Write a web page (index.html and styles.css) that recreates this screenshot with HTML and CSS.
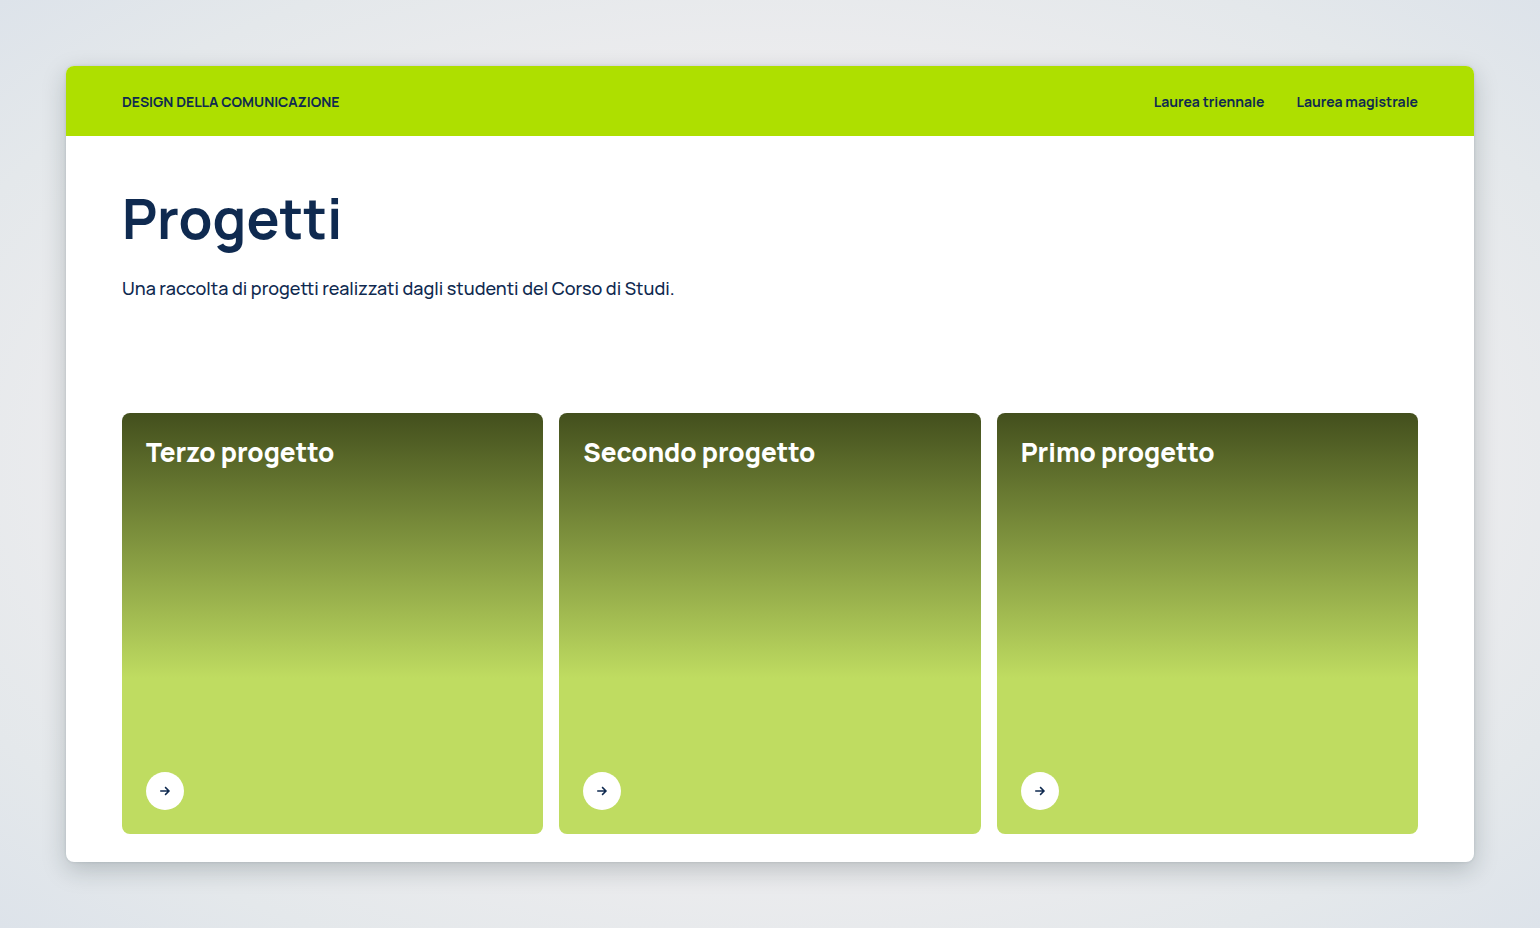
FILE: index.html
```html
<!DOCTYPE html>
<html lang="it">
<head>
<meta charset="utf-8">
<meta name="viewport" content="width=device-width, initial-scale=1">
<title>Progetti – Design della Comunicazione</title>
<link rel="stylesheet" href="styles.css">
</head>
<body>
<div class="page">
  <header class="header">
    <a class="brand" href="#">DESIGN DELLA COMUNICAZIONE</a>
    <nav class="nav">
      <a href="#">Laurea triennale</a>
      <a href="#">Laurea magistrale</a>
    </nav>
  </header>
  <main class="main">
    <h1 class="title">Progetti</h1>
    <p class="intro">Una raccolta di progetti realizzati dagli studenti del Corso di Studi.</p>
    <div class="cards">
      <a class="card" href="#">
        <h2 class="card-title">Terzo progetto</h2>
        <span class="go"><svg viewBox="0 0 12 12" aria-hidden="true"><path d="M1.2 6h8.6M6.1 2.1 10 6 6.1 9.9"/></svg></span>
      </a>
      <a class="card" href="#">
        <h2 class="card-title">Secondo progetto</h2>
        <span class="go"><svg viewBox="0 0 12 12" aria-hidden="true"><path d="M1.2 6h8.6M6.1 2.1 10 6 6.1 9.9"/></svg></span>
      </a>
      <a class="card" href="#">
        <h2 class="card-title">Primo progetto</h2>
        <span class="go"><svg viewBox="0 0 12 12" aria-hidden="true"><path d="M1.2 6h8.6M6.1 2.1 10 6 6.1 9.9"/></svg></span>
      </a>
    </div>
  </main>
</div>
</body>
</html>
```
FILE: styles.css
```css
* { box-sizing: border-box; }

body {
  margin: 0;
  min-height: 100vh;
  padding: 66px;
  background: radial-gradient(ellipse farthest-corner at center, #ececee 60%, #e4e8eb 82%, #dde3ea);
  color: #0f2a50;
  font-family: Manrope, Inter, "Liberation Sans", sans-serif;
}

a { color: inherit; text-decoration: none; }

.page {
  overflow: hidden;
  border-radius: 8px;
  background: #fff;
  box-shadow: 0 0 3px rgba(20, 35, 40, 0.12), 0 8px 24px rgba(20, 35, 40, 0.22);
}

.header {
  display: flex;
  align-items: center;
  justify-content: space-between;
  padding: 25px 56px 23px;
  background: #aedf00;
  font-size: 14px;
  font-weight: 700;
  line-height: 22px;
}

.nav { display: flex; gap: 32px; }

.main { padding: 48px 56px 28px; }

.title {
  margin: 0;
  font-size: 55px;
  font-weight: 700;
  font-variant-ligatures: none;
  line-height: 68px;
}

.intro {
  margin: 22px 0 0;
  font-size: 18px;
  font-weight: 500;
  line-height: 28px;
}

.cards {
  display: grid;
  grid-template-columns: repeat(3, 1fr);
  gap: 16px;
  margin-top: 111px;
}

.card {
  display: flex;
  flex-direction: column;
  align-items: flex-start;
  justify-content: space-between;
  aspect-ratio: 1;
  padding: 24px;
  border-radius: 8px;
  background: linear-gradient(180deg, #434f1d, #bfdc61 63%);
  color: #fff;
}

.card-title {
  margin: 0;
  font-size: 26px;
  font-weight: 800;
  font-variant-ligatures: none;
  line-height: 30px;
}

.go {
  display: grid;
  place-items: center;
  width: 38px;
  height: 38px;
  border-radius: 50%;
  background: #fff;
  color: #0f2a50;
}

.go svg {
  width: 12px;
  height: 12px;
  fill: none;
  stroke: currentColor;
  stroke-width: 1.5;
}
```
